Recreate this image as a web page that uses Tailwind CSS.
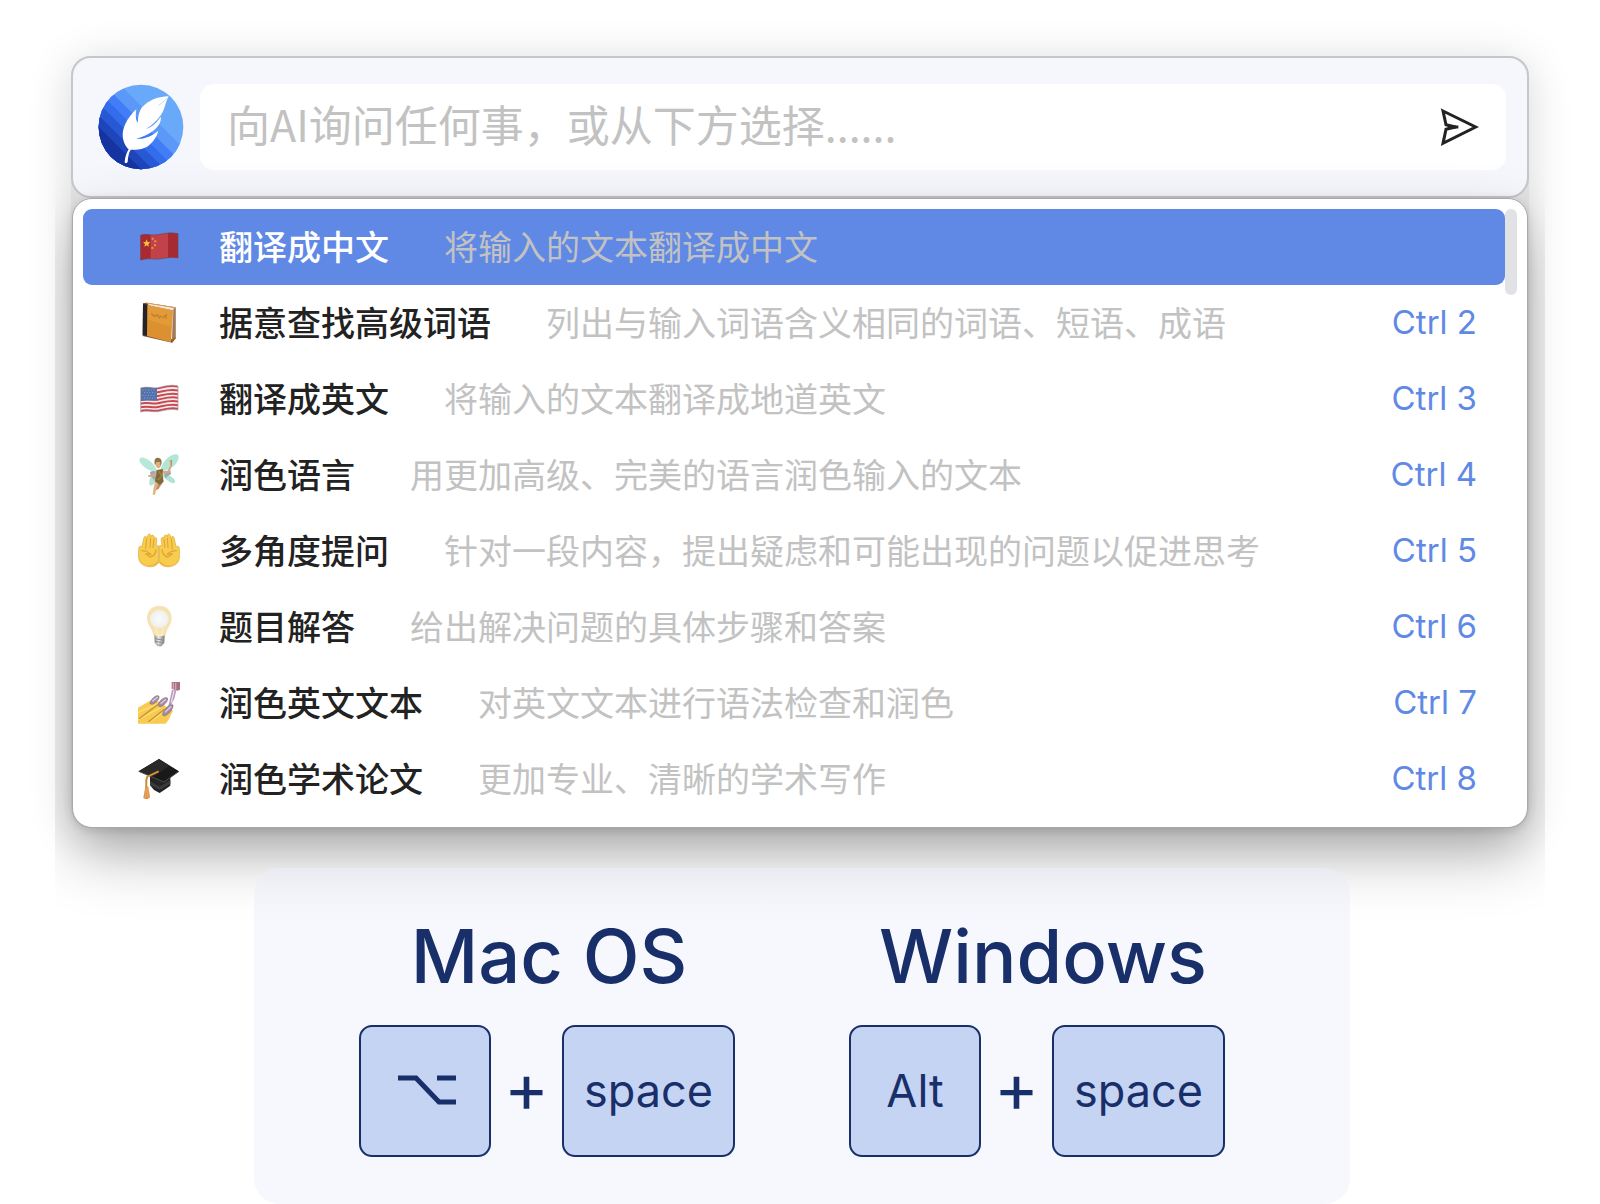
<!DOCTYPE html>
<html lang="zh-CN">
<head>
<meta charset="utf-8">
<meta name="viewport" content="width=device-width, initial-scale=1">
<title>AI 快捷面板</title>
<script src="https://cdn.jsdelivr.net/npm/@tailwindcss/browser@4"></script>
</head>
<body class="bg-white font-['Inter','Noto_Sans_CJK_SC',sans-serif] text-[#222222]">
<main class="px-[71px] pt-14">

  <section class="rounded-[20px] bg-[#e2e2e2] shadow-[0_6px_44px_rgba(0,0,0,0.16)]" aria-label="AI 面板">
    <form class="flex h-[142px] items-center gap-4 rounded-[20px] border-2 border-[#c6c7ca] bg-[#f5f7fc] pr-[21px] pl-[25px]">
      <svg class="size-[86px] shrink-0" viewBox="0 0 258 258" aria-hidden="true">
        <defs><clipPath id="disc"><circle cx="129" cy="129" r="127"/></clipPath></defs>
        <g clip-path="url(#disc)">
          <rect width="258" height="258" fill="#68a9fa"/>
          <g transform="rotate(45 129 129)">
            <rect x="-60" y="84" width="380" height="260" fill="#5c98f8"/>
            <rect x="-60" y="118" width="380" height="220" fill="#417df6"/>
            <rect x="-60" y="144" width="380" height="200" fill="#336deb"/>
            <rect x="-60" y="168" width="380" height="180" fill="#2859d4"/>
            <rect x="-60" y="194" width="380" height="130" fill="#1e46ba"/>
            <rect x="-60" y="218" width="380" height="100" fill="#15349f"/>
          </g>
        </g>
        <path fill="#fff" d="M212 37C178 38 150 50 132 70C123 82 120 98 119 117C113 107 112 93 115 76C96 92 75 124 74 151C74 173 83 188 92 196C86 207 81 219 80 233C79 238 88 238 89 233C90 218 92 207 98 197C116 199 141 195 154 183C169 170 177 156 181 140C158 160 138 165 113 164C139 160 171 142 184 120C189 110 189 104 188 98C174 119 160 130 143 135C165 124 181 105 192 88C201 73 201 58 212 37Z"/>
        <path d="M208 42C199 51 191 57 182 64" fill="none" stroke="#a9c8f8" stroke-width="2"/>
      </svg>
      <div class="flex h-[86px] min-w-0 flex-1 items-center rounded-[14px] bg-white pr-[27px] pl-[27px]">
        <input type="text" aria-label="向AI询问" placeholder="向AI询问任何事，或从下方选择......" class="h-[70px] min-w-0 flex-1 bg-transparent pb-2 font-['Noto_Sans_CJK_SC',sans-serif] text-[43px] outline-none placeholder:text-[#c2c2c2]">
        <button type="submit" aria-label="发送" class="shrink-0">
          <svg class="size-10" viewBox="0 0 120 120" fill="none" stroke="#222" stroke-width="9" stroke-linejoin="miter" aria-hidden="true">
            <path d="M12 12L110 60L12 109L21 67L50 60L21 53Z"/>
            <path d="M26 60H58" stroke-width="9"/>
          </svg>
        </button>
      </div>
    </form>

    <div class="mx-px flex rounded-[20px] border-[1px] border-[#a9a9a9] bg-white py-[10px] pr-[10px] pl-[10px] shadow-[0_28px_60px_rgba(0,0,0,0.27),0_2px_10px_rgba(0,0,0,0.12)] [clip-path:inset(-60px_-17px_-97px_-17px)]">
      <ul class="min-w-0 flex-1 text-[34px]">
        <li><button type="button" class="flex h-[76px] w-full items-center rounded-[9px] bg-[#6089e5] pr-7 pl-[55px] text-left">
          <svg class="mr-[39px] size-[42px] shrink-0" viewBox="0 0 126 126" aria-hidden="true">
            <path d="M8 28C24 22 36 28 48 27C70 26 90 17 120 23V96C90 91 70 101 50 99C36 98 24 98 8 102Z" fill="#c34148"/>
            <path d="M8 28C22 22 30 27 38 27V98C28 97 20 99 8 102Z" fill="#a82a30"/>
            <path d="M90 21C100 20 110 21 120 23V96C110 93 100 93 90 95Z" fill="#a62a31"/>
            <path d="M8 28C24 22 36 28 48 27C70 26 90 17 120 23V96C90 91 70 101 50 99C36 98 24 98 8 102Z" fill="none" stroke="#714457" stroke-width="2"/>
            <path d="M26 40L29 48L37 49L31 54L33 62L26 58L19 62L21 54L15 49L23 48Z" fill="#f6c33c"/>
            <path d="M41 35h6v6h-6zM49 43h6v6h-6zM48 55h6v6h-6zM40 63h6v6h-6z" fill="#dd9a38"/>
          </svg>
          <span class="mr-[55px] font-medium text-white">翻译成中文</span><span class="flex-1 text-[#c2c2c2]">将输入的文本翻译成中文</span>
        </button></li>
        <li><button type="button" class="flex h-[76px] w-full items-center pr-7 pl-[55px] text-left">
          <svg class="mr-[39px] size-[42px] shrink-0" viewBox="0 0 126 126" aria-hidden="true">
            <path d="M15 4L24 2L113 16V109L103 122L14 102Z" fill="#77502f"/>
            <path d="M28 4L112 17V106L100 112Z" fill="#e9e9ec"/>
            <path d="M107 19L112 18V106L102 119Z" fill="#bd6f22"/>
            <path d="M105 24V110M109 21V107" stroke="#85868e" stroke-width="2"/>
            <path d="M27 9L104 25L99 121L25 101Z" fill="#dc9030"/>
            <path d="M27 9L104 25L101 75L26 52Z" fill="#e29b39"/>
            <path d="M15 5L28 8L27 102L14 99Z" fill="#242429"/>
            <path d="M25 3L111 17" stroke="#e89a4c" stroke-width="3"/>
            <path d="M40 35L50 43L58 38L64 47L70 41M73 48L84 39V50" fill="none" stroke="#c07d2b" stroke-width="4"/>
          </svg>
          <span class="mr-[55px] font-medium">据意查找高级词语</span><span class="flex-1 text-[#c2c2c2]">列出与输入词语含义相同的词语、短语、成语</span><kbd class="font-['Inter'] text-[33px] text-[#6089e5]">Ctrl 2</kbd>
        </button></li>
        <li><button type="button" class="flex h-[76px] w-full items-center pr-7 pl-[55px] text-left">
          <svg class="mr-[39px] size-[42px] shrink-0" viewBox="0 0 126 126" aria-hidden="true">
            <defs><clipPath id="usflag"><path d="M8 30C28 24 43 32 59 29C79 25 98 18 120 24V96C98 91 79 98 59 101C40 103 24 96 8 102Z"/></clipPath></defs>
            <g clip-path="url(#usflag)">
              <rect width="126" height="126" fill="#f1eded"/>
              <g fill="none" stroke="#ca4850" stroke-width="6">
                <path d="M6 32C28 26 43 34 59 31C79 27 98 20 122 26"/>
                <path d="M6 44C28 38 43 46 59 43C79 39 98 32 122 38"/>
                <path d="M6 55C28 49 43 57 59 54C79 50 98 43 122 49"/>
                <path d="M6 66C28 60 43 68 59 65C79 61 98 54 122 60"/>
                <path d="M6 77C28 71 43 79 59 76C79 72 98 65 122 71"/>
                <path d="M6 88C28 82 43 90 59 87C79 83 98 76 122 82"/>
                <path d="M6 99C28 93 43 101 59 98C79 94 98 87 122 93"/>
              </g>
              <path d="M8 26C28 24 43 30 57 29V67C42 69 28 65 8 69Z" fill="#5371ab"/>
              <path d="M14 36H54M18 44H52M14 52H54M18 60H52" stroke="#8ba0c8" stroke-width="3" stroke-dasharray="3 5"/>
            </g>
            <path d="M8 30C28 24 43 32 59 29C79 25 98 18 120 24V96C98 91 79 98 59 101C40 103 24 96 8 102Z" fill="none" stroke="#9c8b98" stroke-width="2"/>
          </svg>
          <span class="mr-[55px] font-medium">翻译成英文</span><span class="flex-1 text-[#c2c2c2]">将输入的文本翻译成地道英文</span><kbd class="font-['Inter'] text-[33px] text-[#6089e5]">Ctrl 3</kbd>
        </button></li>
        <li><button type="button" class="flex h-[76px] w-full items-center pr-7 pl-[55px] text-left">
          <svg class="mr-[39px] size-[42px] shrink-0" viewBox="0 0 126 126" aria-hidden="true">
            <path d="M60 56C48 56 18 45 6 25C2 15 6 8 17 11C36 16 53 34 60 56Z" fill="#b9e8da"/>
            <path d="M68 52C66 33 88 5 111 1C125-1 124 14 116 26C104 43 84 50 68 52Z" fill="#b1e5d6"/>
            <path d="M54 56C38 58 29 84 36 94C44 98 55 83 62 62Z" fill="#b4e2d7"/>
            <path d="M72 62C83 56 108 70 111 80C111 93 99 87 90 80C80 74 75 70 72 62Z" fill="#afe3d3"/>
            <path d="M36 54C47 48 57 51 62 62L48 78C40 70 36 62 36 54ZM78 58L97 49L99 60L82 72Z" fill="#9da8b6"/>
            <path d="M57 50L44 62L30 64L31 69L47 68L59 58ZM75 51L89 50L97 33L94 18L101 17L102 35L93 56L76 61Z" fill="#dca780"/>
            <path d="M100 34L101 18" stroke="#bc8b63" stroke-width="3"/>
            <path d="M51 83L64 84L56 101L51 122L44 122L47 100Z" fill="#e2b486"/>
            <path d="M62 83L73 88L61 106L53 108Z" fill="#c48f65"/>
            <path d="M56 48L75 45L74 64L77 83L65 93L50 81L55 64Z" fill="#80683a"/>
            <path d="M62 52L72 66L59 78" fill="none" stroke="#a3803c" stroke-width="5"/>
            <ellipse cx="61" cy="28" rx="9" ry="15" fill="#dfae7d"/>
            <path d="M51 34C45 12 58 7 68 15C73 20 70 31 68 37L66 24L55 24Z" fill="#8b7447"/>
          </svg>
          <span class="mr-[55px] font-medium">润色语言</span><span class="flex-1 text-[#c2c2c2]">用更加高级、完美的语言润色输入的文本</span><kbd class="font-['Inter'] text-[33px] text-[#6089e5]">Ctrl 4</kbd>
        </button></li>
        <li><button type="button" class="flex h-[76px] w-full items-center pr-7 pl-[55px] text-left">
          <svg class="mr-[39px] size-[42px] shrink-0" viewBox="0 0 126 126" aria-hidden="true">
            <defs>
              <g id="palm">
                <path d="M2 59C1 50 6 46 12 50L17 26C19 16 26 18 26 25L29 17C32 9 39 11 38 20C42 12 49 15 48 24C54 19 58 25 56 35L54 45L62 48V96C56 114 24 115 9 100C0 89 1 75 2 59Z" fill="#f8cc4c" stroke="#dda63e" stroke-width="2"/>
                <path d="M26 27L23 58M38 24L36 54M48 27L45 54" fill="none" stroke="#dca332" stroke-width="3"/>
                <path d="M10 62C20 62 32 66 38 73L22 71L37 81C48 78 53 70 54 58" fill="none" stroke="#e2a536" stroke-width="4"/>
                <path d="M3 86C14 109 44 113 61 94V99C44 112 12 110 3 86Z" fill="#e6ac3c"/>
              </g>
            </defs>
            <use href="#palm"/>
            <use href="#palm" transform="matrix(-1 0 0 1 126 0)"/>
          </svg>
          <span class="mr-[55px] font-medium">多角度提问</span><span class="flex-1 text-[#c2c2c2]">针对一段内容，提出疑虑和可能出现的问题以促进思考</span><kbd class="font-['Inter'] text-[33px] text-[#6089e5]">Ctrl 5</kbd>
        </button></li>
        <li><button type="button" class="flex h-[76px] w-full items-center pr-7 pl-[55px] text-left">
          <svg class="mr-[39px] size-[42px] shrink-0" viewBox="0 0 126 126" aria-hidden="true">
            <defs>
              <radialGradient id="glow"><stop offset="0" stop-color="#fbfbfb"/><stop offset="1" stop-color="#efefef"/></radialGradient>
              <linearGradient id="cap"><stop offset="0" stop-color="#8c8c8e"/><stop offset=".4" stop-color="#e8e8e8"/><stop offset="1" stop-color="#77777a"/></linearGradient>
            </defs>
            <path d="M64 0C42 0 27 16 28 38C29 58 44 67 47 88C56 94 73 94 82 88C85 67 99 58 100 38C101 16 86 0 64 0Z" fill="#f6e3ae" stroke="#e6d6b0" stroke-width="1"/>
            <ellipse cx="64" cy="39" rx="28" ry="27" fill="url(#glow)"/>
            <path d="M53 65L60 88H70L76 65" fill="none" stroke="#f9edc9" stroke-width="5"/>
            <path d="M49 88C59 93 71 93 80 88L79 110L73 118C68 124 61 124 56 118L50 110Z" fill="url(#cap)"/>
            <path d="M51 98L78 103M51 106L77 111M57 117H71" stroke="#8b8b8e" stroke-width="3"/>
          </svg>
          <span class="mr-[55px] font-medium">题目解答</span><span class="flex-1 text-[#c2c2c2]">给出解决问题的具体步骤和答案</span><kbd class="font-['Inter'] text-[33px] text-[#6089e5]">Ctrl 6</kbd>
        </button></li>
        <li><button type="button" class="flex h-[76px] w-full items-center pr-7 pl-[55px] text-left">
          <svg class="mr-[39px] size-[42px] shrink-0" viewBox="0 0 126 126" aria-hidden="true">
            <path d="M0 77L40 54L63 59L85 74L105 86C96 102 95 112 82 125H0Z" fill="#f8ca50"/>
            <path d="M0 92L53 67M0 114L71 75M30 123L80 89" stroke="#fbdf7c" stroke-width="4"/>
            <path d="M3 110L59 68M31 120L79 82" fill="none" stroke="#cb922e" stroke-width="4"/>
            <path d="M102 24L115 25L109 50L96 75L91 73Z" fill="#b995b8"/>
            <path d="M108 26L100 62" stroke="#ece0eb" stroke-width="4"/>
            <path d="M101 0H126V23L118 26L101 20Z" fill="#a56f86"/>
            <path d="M106 2V21M113 2V23" stroke="#d2a7bd" stroke-width="4"/>
            <g fill="#a58ba6" stroke="#806879" stroke-width="2">
              <path d="M36 65C38 51 55 37 62 42C67 49 54 63 43 67Z"/>
              <path d="M60 70C62 56 80 43 88 48C92 58 76 72 66 75Z"/>
              <path d="M73 98C77 83 93 65 105 69C106 82 91 98 79 102Z"/>
            </g>
            <path d="M43 58L59 45M68 65L84 52M81 91L100 73" stroke="#ddcedd" stroke-width="4"/>
          </svg>
          <span class="mr-[55px] font-medium">润色英文文本</span><span class="flex-1 text-[#c2c2c2]">对英文文本进行语法检查和润色</span><kbd class="font-['Inter'] text-[33px] text-[#6089e5]">Ctrl 7</kbd>
        </button></li>
        <li><button type="button" class="flex h-[76px] w-full items-center pr-7 pl-[55px] text-left">
          <svg class="mr-[39px] size-[42px] shrink-0" viewBox="0 0 126 126" aria-hidden="true">
            <path d="M36 54L97 57V83L82 94L65 105L48 96L36 82Z" fill="#242425"/>
            <path d="M36 70L65 86L97 67V77L66 95L36 80Z" fill="#3b3b3d"/>
            <path d="M2 40L63 3L123 40L78 72Z" fill="#19191a"/>
            <path d="M2 40L63 3L95 23L45 56Z" fill="#29292a"/>
            <path d="M2 40L78 72L123 40" fill="none" stroke="#4c4c4e" stroke-width="3"/>
            <path d="M62 40L28 56C23 64 25 78 25 90" fill="none" stroke="#c98b30" stroke-width="6"/>
            <path d="M60 41L29 56" stroke="#f0b957" stroke-width="2" stroke-dasharray="3 3"/>
            <path d="M22 86H31L36 117C32 125 20 125 16 119Z" fill="#dc9248"/>
            <path d="M25 91L22 119M29 91L30 119" stroke="#efb77b" stroke-width="2"/>
          </svg>
          <span class="mr-[55px] font-medium">润色学术论文</span><span class="flex-1 text-[#c2c2c2]">更加专业、清晰的学术写作</span><kbd class="font-['Inter'] text-[33px] text-[#6089e5]">Ctrl 8</kbd>
        </button></li>
      </ul>
      <div class="h-[86px] w-3 rounded-full bg-[#e1e2e6]" aria-hidden="true"></div>
    </div>
  </section>

  <div class="relative mt-10 flex justify-center pl-1">
    <section class="flex w-[1096px] justify-center gap-[114px] rounded-[26px] bg-[#f7f8fe] bg-linear-to-b from-[#eaebf1] from-0% via-[#f3f4fa] via-8% to-[#f7f8fe] to-17% pt-[46px] pr-5 pb-[47px] text-[#182f6a]" aria-label="快捷键">
      <div class="flex flex-col items-center gap-[27px]">
        <h2 class="pl-1 text-[74px] leading-[84px] font-medium">Mac OS</h2>
        <div class="flex items-center">
          <kbd class="flex size-[132px] items-center justify-center rounded-[13px] border-2 border-[#182f6a] bg-[#c5d4f3] pl-1">
            <svg class="h-8 w-[58px]" viewBox="0 0 58 32" fill="none" stroke="#182f6a" stroke-width="5" role="img" aria-label="Option"><path d="M0 3H18L41 27H58M39 3H58"/></svg>
          </kbd>
          <span class="w-[71px] pb-2 text-center text-[68px] leading-none">+</span>
          <kbd class="flex h-[132px] w-[173px] items-center justify-center rounded-[13px] border-2 border-[#182f6a] bg-[#c5d4f3] font-['Inter'] text-[45px]">space</kbd>
        </div>
      </div>
      <div class="flex flex-col items-center gap-[27px]">
        <h2 class="pl-3 text-[74px] leading-[84px] font-medium">Windows</h2>
        <div class="flex items-center">
          <kbd class="flex size-[132px] items-center justify-center rounded-[13px] border-2 border-[#182f6a] bg-[#c5d4f3] font-['Inter'] text-[45px]">Alt</kbd>
          <span class="w-[71px] pb-2 text-center text-[68px] leading-none">+</span>
          <kbd class="flex h-[132px] w-[173px] items-center justify-center rounded-[13px] border-2 border-[#182f6a] bg-[#c5d4f3] font-['Inter'] text-[45px]">space</kbd>
        </div>
      </div>
    </section>
  </div>
</main>
</body>
</html>
